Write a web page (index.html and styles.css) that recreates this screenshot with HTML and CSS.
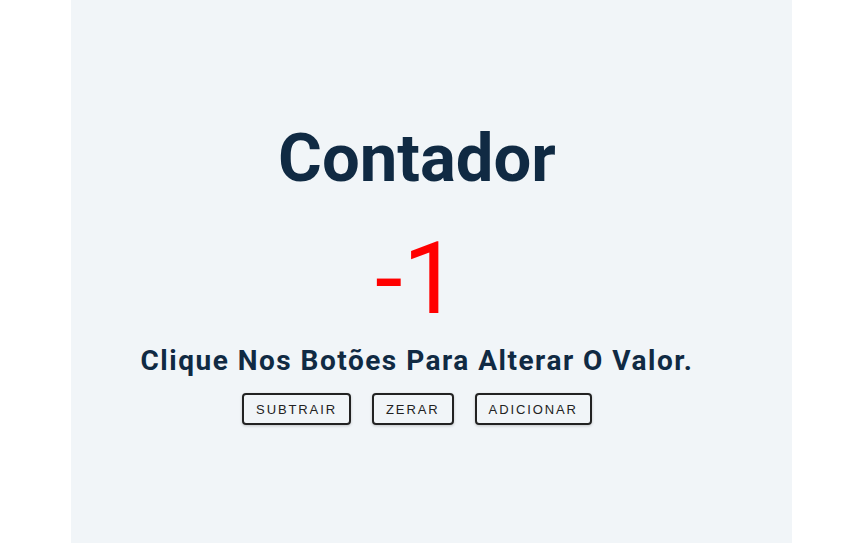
FILE: index.html
```html
<!DOCTYPE html>
<html lang="pt">
<head>
<meta charset="utf-8">
<link rel="stylesheet" href="styles.css">
<title>Contador</title>
</head>
<body>
<main class="panel">
  <div class="counter">
    <h1 class="title">Contador</h1>
    <span class="value">-1</span>
    <p class="hint">clique nos botões para alterar o valor.</p>
    <div class="buttons">
      <button class="btn">subtrair</button>
      <button class="btn">zerar</button>
      <button class="btn">adicionar</button>
    </div>
  </div>
</main>
</body>
</html>
```
FILE: styles.css
```css
* { box-sizing: border-box; }
html, body { margin: 0; padding: 0; background: #ffffff; }
body { font-family: Roboto, "Liberation Sans", sans-serif; color: #102a43; }
.panel {
  width: 721px;
  margin: 0 auto;
  min-height: 100vh;
  padding-right: 28px;
  background: #f1f5f8;
  display: flex;
  align-items: center;
  justify-content: center;
}
.counter { text-align: center; }
.title {
  font-size: 67px;
  font-weight: 700;
  margin: 0 0 26px;
  line-height: 1.2;
}
.value {
  display: block;
  font-size: 100px;
  font-weight: 400;
  color: #ff0000;
  line-height: 1.1;
}
.hint {
  font-size: 28px;
  font-weight: 700;
  text-transform: capitalize;
  letter-spacing: 1.5px;
  margin: 10px 0 16px;
}
.buttons {
  display: flex;
  justify-content: center;
  gap: 21px;
}
.btn {
  font-family: "Liberation Sans", Arial, sans-serif;
  font-size: 13px;
  text-transform: uppercase;
  letter-spacing: 1.9px;
  color: #222;
  background: transparent;
  border: 2px solid #222;
  border-radius: 4px;
  padding: 7px 12px 6px;
  box-shadow: 0 1px 3px rgba(0,0,0,0.2);
}
```
